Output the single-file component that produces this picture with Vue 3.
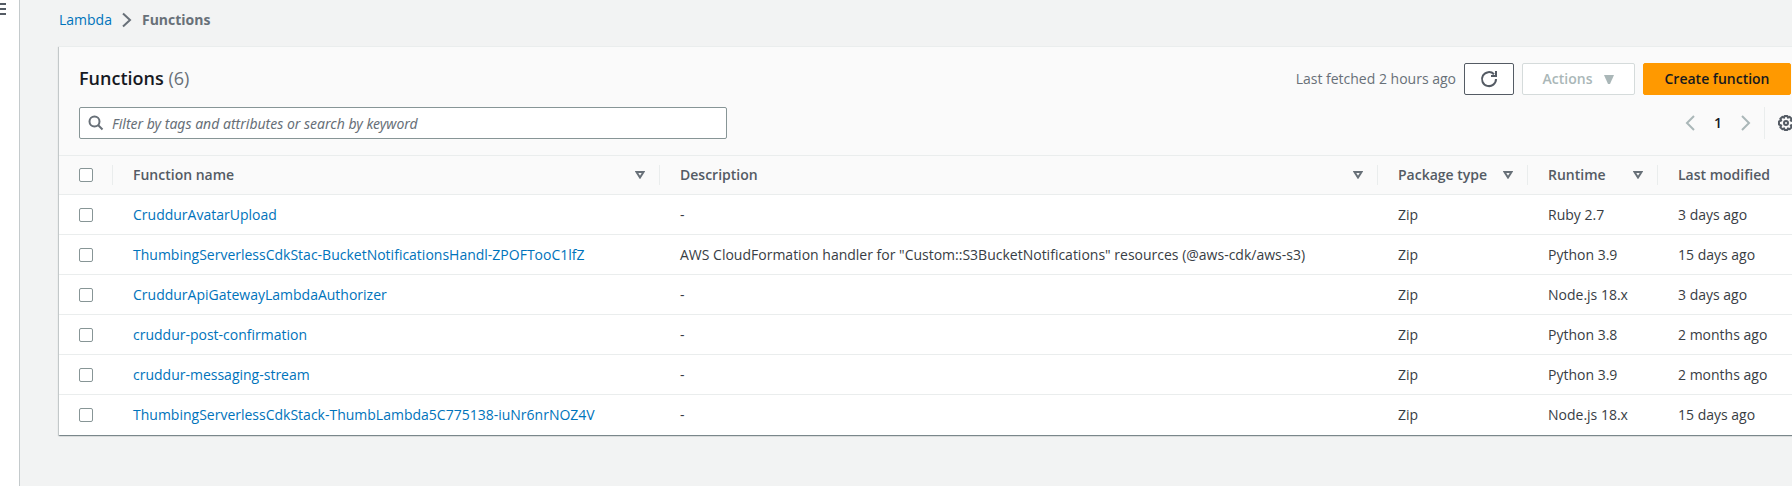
<script setup>
import { ref } from 'vue'

const columns = [
  { key: 'name', label: 'Function name', sortable: true },
  { key: 'description', label: 'Description', sortable: true },
  { key: 'pack', label: 'Package type', sortable: true },
  { key: 'runtime', label: 'Runtime', sortable: true },
  { key: 'modified', label: 'Last modified', sortable: false },
]

const rows = ref([
  { name: 'CruddurAvatarUpload', description: '-', runtime: 'Ruby 2.7', modified: '3 days ago' },
  {
    name: 'ThumbingServerlessCdkStac-BucketNotificationsHandl-ZPOFTooC1lfZ',
    description: 'AWS CloudFormation handler for "Custom::S3BucketNotifications" resources (@aws-cdk/aws-s3)',
    runtime: 'Python 3.9',
    modified: '15 days ago',
  },
  { name: 'CruddurApiGatewayLambdaAuthorizer', description: '-', runtime: 'Node.js 18.x', modified: '3 days ago' },
  { name: 'cruddur-post-confirmation', description: '-', runtime: 'Python 3.8', modified: '2 months ago' },
  { name: 'cruddur-messaging-stream', description: '-', runtime: 'Python 3.9', modified: '2 months ago' },
  {
    name: 'ThumbingServerlessCdkStack-ThumbLambda5C775138-iuNr6nrNOZ4V',
    description: '-',
    runtime: 'Node.js 18.x',
    modified: '15 days ago',
  },
])

const query = ref('')
</script>

<template>
  <div class="page">
    <aside class="rail">
      <button class="menu" type="button" aria-label="Open navigation">
        <span class="bar"></span><span class="bar"></span><span class="bar"></span>
      </button>
    </aside>
    <main class="content">
      <nav class="crumbs" aria-label="Breadcrumbs">
        <a class="link" href="#lambda">Lambda</a>
        <svg class="crumb-arrow" width="10" height="16" viewBox="0 0 10 16" aria-hidden="true">
          <path d="M1 1.5 8 8 1 14.5" fill="none" stroke="#687078" stroke-width="2" />
        </svg>
        <span class="current">Functions</span>
      </nav>

      <section class="panel">
        <header class="head">
          <div class="title-row">
            <h2 class="title">Functions <span class="count">(6)</span></h2>
            <div class="actions">
              <span class="fetched">Last fetched 2 hours ago</span>
              <button class="btn refresh" type="button" aria-label="Refresh">
                <svg width="18" height="18" viewBox="0 0 18 18" aria-hidden="true">
                  <path d="M16 9A7 7 0 1 1 14 4.2" fill="none" stroke="#545b64" stroke-width="2" />
                  <path d="M16 1v5h-5" fill="none" stroke="#545b64" stroke-width="2" />
                </svg>
              </button>
              <button class="btn more" type="button" disabled>
                Actions
                <svg width="10" height="9" viewBox="0 0 10 9" aria-hidden="true">
                  <path d="M0 0h10L6 9H4z" fill="#aab7b8" />
                </svg>
              </button>
              <button class="btn primary" type="button">Create function</button>
            </div>
          </div>
          <div class="tools">
            <div class="search">
              <svg width="16" height="16" viewBox="0 0 16 16" aria-hidden="true">
                <circle cx="6.5" cy="6.5" r="5" fill="none" stroke="#687078" stroke-width="2" />
                <path d="M10 10l4.500 4.500" stroke="#687078" stroke-width="2" />
              </svg>
              <input
                v-model="query"
                type="text"
                aria-label="Filter functions"
                placeholder="Filter by tags and attributes or search by keyword"
              />
            </div>
            <div class="pager">
              <button class="icon-btn" type="button" disabled aria-label="Previous page">
                <svg width="10" height="16" viewBox="0 0 10 16" aria-hidden="true">
                  <path d="M9 1 2 8l7 7" fill="none" stroke="#aab7b8" stroke-width="2" />
                </svg>
              </button>
              <button class="icon-btn num" type="button">1</button>
              <button class="icon-btn" type="button" disabled aria-label="Next page">
                <svg width="10" height="16" viewBox="0 0 10 16" aria-hidden="true">
                  <path d="m1 1 7 7-7 7" fill="none" stroke="#aab7b8" stroke-width="2" />
                </svg>
              </button>
              <button class="gear" type="button" aria-label="Preferences">
                <svg width="16" height="16" viewBox="0 0 16 16" aria-hidden="true">
                  <path
                    d="M6.6 1h2.8l.5 1.7 1.6-.9 2.2 2-.9 1.7 2.2.9v3.2l-2.2.9.9 1.7-2.2 2-1.6-.8-.5 1.6H6.6l-.5-1.6-1.6.8-2.2-2 .9-1.7L1 9.6V6.4l2.2-.9-.9-1.7 2.2-2 1.6.9z"
                    fill="none"
                    stroke="#545b64"
                    stroke-width="2"
                    stroke-linejoin="round"
                  />
                  <circle cx="8" cy="8" r="2" fill="none" stroke="#545b64" stroke-width="2" />
                </svg>
              </button>
            </div>
          </div>
        </header>

        <table class="grid">
          <colgroup>
            <col class="c-check" />
            <col class="c-name" />
            <col />
            <col class="c-pack" />
            <col class="c-run" />
            <col class="c-mod" />
          </colgroup>
          <thead>
            <tr>
              <th scope="col"><div class="cell"><input type="checkbox" aria-label="Select all functions" /></div></th>
              <th v-for="c in columns" :key="c.key" scope="col">
                <div class="cell" :class="{ last: !c.sortable }">
                  <span>{{ c.label }}</span>
                  <button v-if="c.sortable" class="sort" type="button" :aria-label="'Sort by ' + c.label">
                    <svg width="10" height="8" viewBox="0 0 10 8" aria-hidden="true">
                      <path d="M1.5 1h7L5 6.5z" fill="none" stroke="#687078" stroke-width="2" />
                    </svg>
                  </button>
                </div>
              </th>
            </tr>
          </thead>
          <tbody>
            <tr v-for="r in rows" :key="r.name">
              <td><input type="checkbox" :aria-label="'Select ' + r.name" /></td>
              <td><a class="link" href="#function">{{ r.name }}</a></td>
              <td>{{ r.description }}</td>
              <td>Zip</td>
              <td>{{ r.runtime }}</td>
              <td>{{ r.modified }}</td>
            </tr>
          </tbody>
        </table>
      </section>
    </main>
  </div>
</template>

<style>
body {
  background: #f2f3f3;
}
</style>

<style scoped>
.page {
  display: flex;
  min-height: 100vh;
  overflow: hidden;
  box-sizing: border-box;
  background: #f2f3f3;
  color: #383d44;
  font: 14px/20px 'Open Sans', 'Noto Sans', sans-serif;
}
.page *,
.page *::before {
  box-sizing: border-box;
}
button,
input {
  margin: 0;
  padding: 0;
  border: 0;
  background: none;
  font: inherit;
  color: inherit;
}
svg {
  display: block;
  flex: none;
}
.rail {
  flex: none;
  width: 20px;
  background: #fff;
  border-right: 1px solid #c4cacc;
}
.menu {
  display: flex;
  flex-direction: column;
  gap: 3px;
  width: 6px;
  padding-top: 3px;
}
.bar {
  height: 2px;
  background: #545b64;
}
.content {
  flex: 1;
  min-width: 0;
  margin-right: -20px;
  padding: 10px 0 50px 39px;
}
.crumbs {
  display: flex;
  align-items: center;
  gap: 10px;
  margin-bottom: 16px;
}
.link {
  color: #0073bb;
  text-decoration: none;
}
.current {
  color: #687078;
  font-weight: 700;
}
.panel {
  background: #fff;
  border-top: 1px solid #eaeded;
  box-shadow:
    0 1px 1px 0 rgba(0, 28, 36, 0.3),
    1px 1px 1px 0 rgba(0, 28, 36, 0.15),
    -1px 1px 1px 0 rgba(0, 28, 36, 0.15);
}
.head {
  padding: 16px 10px 16px 20px;
  background: #fafafa;
  border-bottom: 1px solid #eaeded;
}
.title-row {
  display: flex;
  align-items: center;
  justify-content: space-between;
  margin: 0 11px 12px 0;
}
.title {
  margin: 0;
  padding-bottom: 2px;
  color: #16191f;
  font-size: 18px;
  line-height: 24px;
  font-weight: 600;
}
.count {
  color: #687078;
  font-weight: 400;
}
.actions {
  display: flex;
  align-items: center;
  gap: 8px;
}
.fetched {
  color: #687078;
}
.btn {
  display: flex;
  align-items: center;
  justify-content: center;
  height: 32px;
  border: 1px solid #545b64;
  border-radius: 2px;
  background: #fff;
  font-weight: 600;
}
.refresh {
  width: 50px;
}
.more {
  gap: 12px;
  width: 113px;
  border-color: #d5dbdb;
  color: #aab7b8;
}
.primary {
  width: 148px;
  border-color: #ff9900;
  background: #ff9900;
  color: #16191f;
}
.tools {
  display: flex;
  align-items: center;
  justify-content: space-between;
}
.search {
  display: flex;
  align-items: center;
  gap: 8px;
  flex: 0 1 648px;
  height: 32px;
  padding-left: 8px;
  border: 1px solid #879596;
  border-radius: 2px;
  background: #fff;
}
.search input {
  flex: 1;
  height: 30px;
  outline: 0;
  font-family: 'Noto Sans', 'Open Sans', sans-serif;
}
.search input::placeholder {
  color: #687078;
  font-style: italic;
  opacity: 1;
}
.pager {
  display: flex;
  align-items: center;
}
.icon-btn {
  display: flex;
  align-items: center;
  justify-content: center;
  width: 28px;
  height: 32px;
}
.num {
  color: #16191f;
  font-weight: 600;
}
.gear {
  display: flex;
  align-items: center;
  height: 32px;
  width: 38px;
  margin-left: 4px;
  padding-left: 13px;
  border-left: 1px solid #eaeded;
}
.grid {
  width: 100%;
  table-layout: fixed;
  border-collapse: separate;
  border-spacing: 0;
}
.c-check {
  width: 54px;
}
.c-name {
  width: 547px;
}
.c-pack {
  width: 150px;
}
.c-run {
  width: 130px;
}
.c-mod {
  width: 154px;
}
th {
  height: 39px;
  padding: 0;
  background: #fafafa;
  border-bottom: 1px solid #eaeded;
  color: #545b64;
  font-weight: 600;
  text-align: left;
  white-space: nowrap;
}
.cell {
  display: flex;
  align-items: center;
  justify-content: space-between;
  height: 20px;
  padding: 0 14px 0 20px;
  border-right: 1px solid #eaeded;
}
.cell.last {
  border-right: 0;
}
.sort {
  display: block;
}
td {
  height: 40px;
  padding: 0 0 0 20px;
  border-bottom: 1px solid #eaeded;
  white-space: nowrap;
}
tbody tr:last-child td {
  border-bottom-color: #fff;
}
input[type='checkbox'] {
  display: block;
  appearance: none;
  flex: none;
  width: 14px;
  height: 14px;
  border: 1px solid #879596;
  border-radius: 2px;
  background: #fff;
}
</style>
